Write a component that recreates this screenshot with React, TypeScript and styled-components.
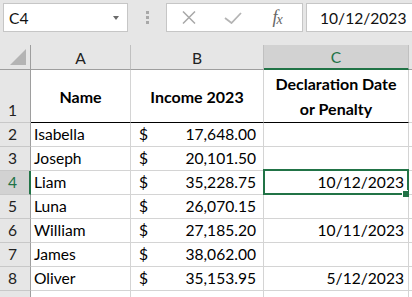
import React from 'react';
import styled, { createGlobalStyle } from 'styled-components';

const GlobalStyle = createGlobalStyle`
  html, body {
    margin: 0;
    padding: 0;
    background: #e6e6e6;
  }
  body {
    font-family: Lato, "Liberation Sans", sans-serif;
  }
`;

const green = '#217346';

const Window = styled.div`
  width: 412px;
  height: 297px;
  overflow: hidden;
  background: #e6e6e6;
  display: flex;
  flex-direction: column;
`;

const FormulaBar = styled.div`
  display: flex;
  height: 29px;
  padding: 3px 0 13px 3px;
  flex: none;
`;

const Box = styled.div`
  box-sizing: border-box;
  height: 29px;
  background: #fff;
  border: 1px solid #c6c6c6;
  display: flex;
  align-items: center;
  font-size: 15.6px;
  color: #111;
`;

const NameBox = styled(Box)`
  width: 125px;
  justify-content: space-between;
  padding: 0 8px 0 5px;
`;

const Caret = styled.span`
  width: 0;
  height: 0;
  border-left: 3.5px solid transparent;
  border-right: 3.5px solid transparent;
  border-top: 4px solid #6a6a6a;
`;

const Grip = styled.div`
  width: 38px;
  display: flex;
  flex-direction: column;
  align-items: center;
  justify-content: center;
  gap: 2px;

  span {
    width: 3px;
    height: 3px;
    background: #a8a8a8;
  }
`;

const FxBox = styled(Box)`
  width: 137px;
`;

const IconSlot = styled.div`
  width: 44px;
  display: flex;
  justify-content: center;
  align-items: center;
`;

const Fx = styled.span`
  font-family: "Liberation Serif", serif;
  font-style: italic;
  color: #666;
  font-size: 18px;
  letter-spacing: -1px;

  small {
    font-size: 14px;
    position: relative;
    top: 1px;
  }
`;

const FormulaInput = styled(Box)`
  flex: 1;
  margin-left: 3px;
  border-right: none;
  padding-left: 13px;
`;

const Grid = styled.div`
  flex: none;
  display: grid;
  grid-template-columns: 31px 100px 133px 145px 1fr;
  grid-template-rows: 25px 53px repeat(8, 24px);
  background: #fff;
  font-size: 15.6px;
  color: #000;
`;

const Corner = styled.div`
  box-sizing: border-box;
  background: #e6e6e6;
  border-right: 1px solid #9e9e9e;
  border-bottom: 1px solid #9e9e9e;
  display: flex;
  justify-content: flex-end;
  align-items: flex-end;
  padding: 0 4px 4px 0;
`;

const Triangle = styled.span`
  width: 0;
  height: 0;
  border-left: 16px solid transparent;
  border-bottom: 16px solid #b4b4b4;
`;

const ColHead = styled.div<{ $active?: boolean }>`
  box-sizing: border-box;
  display: flex;
  align-items: center;
  justify-content: center;
  background: ${p => (p.$active ? '#d2d2d2' : '#e6e6e6')};
  color: ${p => (p.$active ? green : '#222')};
  border-right: 1px solid #c0c0c0;
  border-bottom: ${p => (p.$active ? `2px solid ${green}` : '1px solid #9e9e9e')};
  padding-top: 1px;
`;

const RowHead = styled.div<{ $active?: boolean }>`
  box-sizing: border-box;
  display: flex;
  align-items: flex-end;
  padding: 0 0 2px 8px;
  line-height: 19px;
  background: ${p => (p.$active ? '#d2d2d2' : '#e6e6e6')};
  color: ${p => (p.$active ? green : '#222')};
  border-right: ${p => (p.$active ? `2px solid ${green}` : '1px solid #9e9e9e')};
  border-bottom: 1px solid #c8c8c8;
`;

const Cell = styled.div<{ $justify?: string; $selected?: boolean }>`
  box-sizing: border-box;
  position: relative;
  display: flex;
  align-items: flex-end;
  justify-content: ${p => p.$justify ?? 'flex-start'};
  padding: 0 4px 2px 3px;
  line-height: 19px;
  white-space: nowrap;
  border-right: 1px solid #d4d4d4;
  border-bottom: 1px solid #d4d4d4;

  ${p =>
    p.$selected &&
    `
    &::before {
      content: '';
      position: absolute;
      top: -2px;
      left: -1px;
      right: -1px;
      bottom: -1px;
      border: 2px solid ${green};
    }
    &::after {
      content: '';
      position: absolute;
      right: -1px;
      bottom: -3px;
      width: 6px;
      height: 6px;
      background: ${green};
      box-shadow: -1px -1px 0 0 #fff;
      z-index: 2;
    }
  `}
`;

const MoneyCell = styled(Cell)`
  justify-content: space-between;
  padding: 0 7px 2px 8px;
`;

const TitleCell = styled(Cell)`
  align-items: center;
  justify-content: center;
  text-align: center;
  font-size: 16px;
  font-weight: 700;
  line-height: 25px;
  padding: 0 2px;
  white-space: normal;
  border-bottom: 1px solid #000;
`;

const rows = [
  { name: 'Isabella', income: '17,648.00', date: '' },
  { name: 'Joseph', income: '20,101.50', date: '' },
  { name: 'Liam', income: '35,228.75', date: '10/12/2023' },
  { name: 'Luna', income: '26,070.15', date: '' },
  { name: 'William', income: '27,185.20', date: '10/11/2023' },
  { name: 'James', income: '38,062.00', date: '' },
  { name: 'Oliver', income: '35,153.95', date: '5/12/2023' },
];

const App: React.FC = () => {
  return (
    <>
      <GlobalStyle />
      <Window>
        <FormulaBar>
          <NameBox>
            <span>C4</span>
            <Caret />
          </NameBox>
          <Grip>
            <span />
            <span />
            <span />
          </Grip>
          <FxBox>
            <IconSlot>
              <svg width="14" height="13" viewBox="0 0 14 13">
                <path d="M1 0.5L13 12.5M13 0.5L1 12.5" stroke="#a8a8a8" strokeWidth="1.5" fill="none" />
              </svg>
            </IconSlot>
            <IconSlot>
              <svg width="18" height="12" viewBox="0 0 18 12">
                <polyline points="1,6 7.5,11 17,1" stroke="#b4b4b4" strokeWidth="1.8" fill="none" />
              </svg>
            </IconSlot>
            <IconSlot>
              <Fx>
                f<small>x</small>
              </Fx>
            </IconSlot>
          </FxBox>
          <FormulaInput>10/12/2023</FormulaInput>
        </FormulaBar>

        <Grid>
          <Corner>
            <Triangle />
          </Corner>
          <ColHead>A</ColHead>
          <ColHead>B</ColHead>
          <ColHead $active>C</ColHead>
          <ColHead />

          <RowHead>1</RowHead>
          <TitleCell>Name</TitleCell>
          <TitleCell>Income 2023</TitleCell>
          <TitleCell>
            Declaration Date
            <br />
            or Penalty
          </TitleCell>
          <Cell />

          {rows.map((r, i) => (
            <React.Fragment key={r.name}>
              <RowHead $active={i === 2}>{i + 2}</RowHead>
              <Cell>{r.name}</Cell>
              <MoneyCell>
                <span>$</span>
                <span>{r.income}</span>
              </MoneyCell>
              <Cell $justify="flex-end" $selected={i === 2}>
                {r.date}
              </Cell>
              <Cell />
            </React.Fragment>
          ))}

          <RowHead />
          <Cell />
          <Cell />
          <Cell />
          <Cell />
        </Grid>
      </Window>
    </>
  );
};

export default App;
